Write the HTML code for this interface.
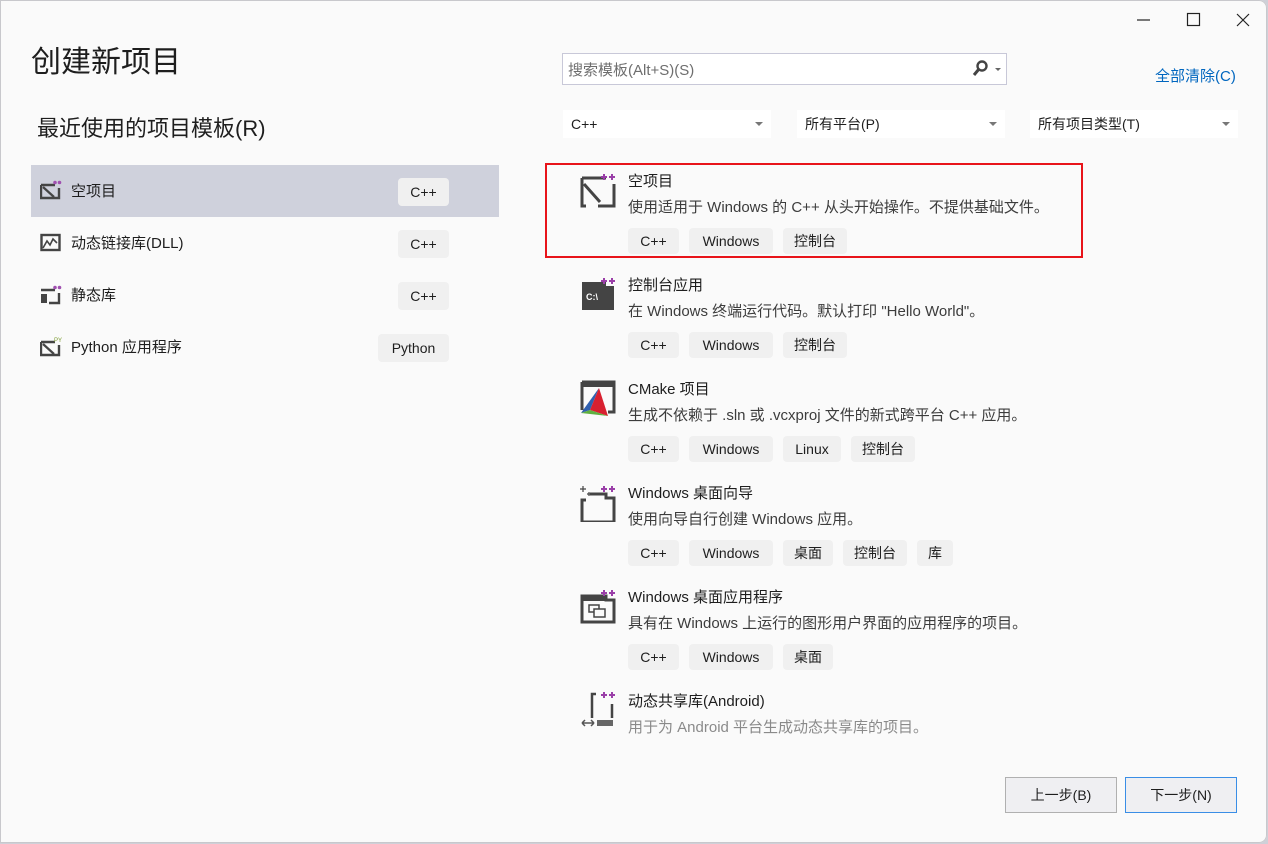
<!DOCTYPE html>
<html><head><meta charset="utf-8"><style>
*{margin:0;padding:0;box-sizing:border-box}
body{width:1268px;height:844px;background:#cfd0d8;font-family:"Liberation Sans","Noto Sans CJK SC",sans-serif;overflow:hidden;position:relative}
.win{position:absolute;left:0;top:0;width:1267px;height:843px;background:#fafafa;box-shadow:inset 0 0 0 1px #c8c8cc;border-radius:0 8px 8px 0}
.a{position:absolute;white-space:nowrap}
.tag{position:absolute;height:26px;line-height:26px;background:#f0f0f0;border-radius:4px;font-size:14px;color:#1e1e1e;text-align:center}
.t{font-size:15px;color:#1e1e1e;margin-top:-1px}
.d{font-size:15px;color:#3c3c3c;margin-top:-1px}
.dd{position:absolute;height:28px;background:#fff;font-size:14px;line-height:28px;padding-left:8px;color:#1e1e1e}
.dd:after{content:"";position:absolute;right:8px;top:12px;border:4px solid transparent;border-top:4px solid #777}
.lt{position:absolute;height:28px;line-height:28px;background:#f0f0f0;border-radius:4px;font-size:14px;text-align:center;color:#1e1e1e}
.btn{position:absolute;height:36px;line-height:34px;background:#efeff2;border:1px solid #b0b0b0;font-size:14px;text-align:center;color:#1e1e1e}
</style></head><body><div class="win">
<svg class="a" style="left:1135px;top:10px" width="120" height="20"><path d="M2 10H15" stroke="#222" stroke-width="1.2"/><rect x="52.5" y="3.5" width="12" height="12" fill="none" stroke="#222" stroke-width="1.2"/><path d="M102 4L114 16M114 4L102 16" stroke="#222" stroke-width="1.2"/></svg>
<div class="a" style="left:31px;top:37px;font-size:30px;color:#1e1e1e">创建新项目</div>
<div class="a" style="left:37px;top:111px;font-size:22px;color:#1e1e1e">最近使用的项目模板(R)</div>
<div class="a" style="left:31px;top:165px;width:468px;height:52px;background:#cfd1dc"></div>
<svg class="a" style="left:40px;top:180px" width="22" height="20"><path d="M1 5H15M1 5V18H19V8" fill="none" stroke="#444" stroke-width="2.4"/><path d="M3 7L14 17" stroke="#444" stroke-width="2.2"/><circle cx="15" cy="2.5" r="1.8" fill="#a050b0"/><circle cx="19.5" cy="2.5" r="1.8" fill="#a050b0"/></svg>
<div class="a t" style="left:71px;top:181px">空项目</div><div class="lt" style="left:398px;top:178px;width:51px">C++</div>
<svg class="a" style="left:40px;top:233px" width="22" height="20"><rect x="1.5" y="2" width="18" height="15" fill="none" stroke="#444" stroke-width="2.4"/><path d="M3 15L7 8L10 12L13 6L17 10" fill="none" stroke="#444" stroke-width="1.6"/></svg>
<div class="a t" style="left:71px;top:233px">动态链接库(DLL)</div><div class="lt" style="left:398px;top:230px;width:51px">C++</div>
<svg class="a" style="left:40px;top:285px" width="22" height="20"><path d="M1 5H15M19 8V18H9" fill="none" stroke="#444" stroke-width="2.4"/><rect x="1" y="9" width="6" height="9" fill="#444"/><circle cx="15" cy="2.5" r="1.8" fill="#a050b0"/><circle cx="19.5" cy="2.5" r="1.8" fill="#a050b0"/></svg>
<div class="a t" style="left:71px;top:285px">静态库</div><div class="lt" style="left:398px;top:282px;width:51px">C++</div>
<svg class="a" style="left:40px;top:337px" width="22" height="20"><path d="M1 5H15M1 5V18H19V8" fill="none" stroke="#444" stroke-width="2.4"/><path d="M3 7L14 17" stroke="#444" stroke-width="2.2"/><text x="14" y="5" font-size="6" fill="#7a9a30">PY</text></svg>
<div class="a t" style="left:71px;top:337px">Python 应用程序</div><div class="lt" style="left:378px;top:334px;width:71px">Python</div>

<div class="a" style="left:562px;top:53px;width:445px;height:32px;background:#fff;border:1px solid #c8c8d8"></div>
<div class="a" style="left:568px;top:59px;font-size:15px;color:#6e6e6e">搜索模板(Alt+S)(S)</div>
<svg class="a" style="left:972px;top:60px" width="34" height="18"><circle cx="10" cy="6" r="4.5" fill="none" stroke="#444" stroke-width="2.4"/><path d="M7 9L2 15" stroke="#444" stroke-width="3"/><path d="M23 8h6l-3 3z" fill="#666"/></svg>
<div class="a" style="left:1155px;top:65px;font-size:15px;color:#0066bf">全部清除(C)</div>
<div class="dd" style="left:563px;top:110px;width:208px">C++</div>
<div class="dd" style="left:797px;top:110px;width:208px">所有平台(P)</div>
<div class="dd" style="left:1030px;top:110px;width:208px">所有项目类型(T)</div>

<div class="a" style="left:545px;top:163px;width:538px;height:95px;border:2px solid #e8141a"></div>

<svg class="a" style="left:580px;top:172px" width="38" height="36"><path d="M2 6H26M34 12V34H18M2 6V34H6" fill="none" stroke="#444" stroke-width="3"/><path d="M4 12L20 30" stroke="#444" stroke-width="3"/><path d="M24 2v6M21 5h6M32 2v6M29 5h6" stroke="#9a3ea8" stroke-width="2"/></svg>
<div class="a t" style="left:628px;top:171px">空项目</div>
<div class="a d" style="left:628px;top:197px">使用适用于 Windows 的 C++ 从头开始操作。不提供基础文件。</div>
<div class="tag" style="left:628px;top:228px;width:51px">C++</div><div class="tag" style="left:689px;top:228px;width:84px">Windows</div><div class="tag" style="left:783px;top:228px;width:64px">控制台</div>

<svg class="a" style="left:580px;top:276px" width="38" height="36"><path d="M2 6H26V10H34V34H2Z" fill="#444"/><text x="6" y="24" font-size="9" font-weight="bold" fill="#fff" font-family="Liberation Sans">C:\</text><path d="M24 2v6M21 5h6M32 2v6M29 5h6" stroke="#9a3ea8" stroke-width="2"/></svg>
<div class="a t" style="left:628px;top:275px">控制台应用</div>
<div class="a d" style="left:628px;top:301px">在 Windows 终端运行代码。默认打印 "Hello World"。</div>
<div class="tag" style="left:628px;top:332px;width:51px">C++</div><div class="tag" style="left:689px;top:332px;width:84px">Windows</div><div class="tag" style="left:783px;top:332px;width:64px">控制台</div>

<svg class="a" style="left:580px;top:380px" width="38" height="38"><path d="M2 2H34V32H28" fill="none" stroke="#444" stroke-width="3"/><path d="M2 2V30" stroke="#444" stroke-width="3"/><rect x="2" y="2" width="32" height="5" fill="#444"/><path d="M19 8L1 33L10 30Z" fill="#3060b0"/><path d="M19 8L28 36L10 30Z" fill="#d82030"/><path d="M1 33L10 30L28 36Z" fill="#60b040"/></svg>
<div class="a t" style="left:628px;top:379px">CMake 项目</div>
<div class="a d" style="left:628px;top:405px">生成不依赖于 .sln 或 .vcxproj 文件的新式跨平台 C++ 应用。</div>
<div class="tag" style="left:628px;top:436px;width:51px">C++</div><div class="tag" style="left:689px;top:436px;width:84px">Windows</div><div class="tag" style="left:783px;top:436px;width:58px">Linux</div><div class="tag" style="left:851px;top:436px;width:64px">控制台</div>

<svg class="a" style="left:580px;top:484px" width="38" height="38"><path d="M10 10H26V14H34V38H2V16H6" fill="none" stroke="#444" stroke-width="3"/><path d="M3 2v6M0 5h6M9 8v4M7 10h4" stroke="#444" stroke-width="1.2"/><path d="M24 2v6M21 5h6M32 2v6M29 5h6" stroke="#9a3ea8" stroke-width="2"/></svg>
<div class="a t" style="left:628px;top:483px">Windows 桌面向导</div>
<div class="a d" style="left:628px;top:509px">使用向导自行创建 Windows 应用。</div>
<div class="tag" style="left:628px;top:540px;width:51px">C++</div><div class="tag" style="left:689px;top:540px;width:84px">Windows</div><div class="tag" style="left:783px;top:540px;width:50px">桌面</div><div class="tag" style="left:843px;top:540px;width:64px">控制台</div><div class="tag" style="left:917px;top:540px;width:36px">库</div>

<svg class="a" style="left:580px;top:588px" width="38" height="38"><path d="M2 8H26V12H34V34H2Z" fill="none" stroke="#444" stroke-width="3"/><rect x="2" y="8" width="24" height="5" fill="#444"/><rect x="9" y="17" width="10" height="7" fill="none" stroke="#444" stroke-width="1.5"/><rect x="14" y="21" width="11" height="8" fill="#fafafa" stroke="#444" stroke-width="1.5"/><path d="M24 2v6M21 5h6M32 2v6M29 5h6" stroke="#9a3ea8" stroke-width="2"/></svg>
<div class="a t" style="left:628px;top:587px">Windows 桌面应用程序</div>
<div class="a d" style="left:628px;top:613px">具有在 Windows 上运行的图形用户界面的应用程序的项目。</div>
<div class="tag" style="left:628px;top:644px;width:51px">C++</div><div class="tag" style="left:689px;top:644px;width:84px">Windows</div><div class="tag" style="left:783px;top:644px;width:50px">桌面</div>

<svg class="a" style="left:580px;top:690px" width="38" height="40"><path d="M16 4H12V28M32 14V28" fill="none" stroke="#444" stroke-width="2.5"/><path d="M2 33H14M2 33l3-3M2 33l3 3M14 33l-3-3M14 33l-3 3" stroke="#555" stroke-width="1.5" fill="none"/><rect x="17" y="30" width="16" height="6" fill="#666"/><path d="M24 2v6M21 5h6M32 2v6M29 5h6" stroke="#9a3ea8" stroke-width="2"/></svg>
<div class="a t" style="left:628px;top:691px">动态共享库(Android)</div>
<div class="a d" style="left:628px;top:717px;color:#8a8a8a">用于为 Android 平台生成动态共享库的项目。</div>

<div class="btn" style="left:1005px;top:777px;width:112px">上一步(B)</div>
<div class="btn" style="left:1125px;top:777px;width:112px;border-color:#3a8ee6">下一步(N)</div>
</div></body></html>
